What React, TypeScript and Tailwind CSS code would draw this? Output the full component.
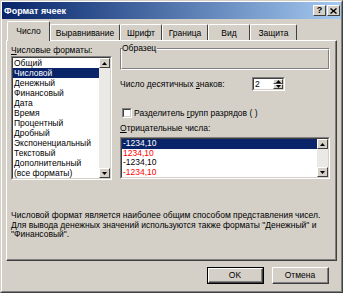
const formats = [
  'Общий',
  'Числовой',
  'Денежный',
  'Финансовый',
  'Дата',
  'Время',
  'Процентный',
  'Дробный',
  'Экспоненциальный',
  'Текстовый',
  'Дополнительный',
  '(все форматы)',
];

const negatives = [
  { text: '-1234,10', color: 'text-white', selected: true },
  { text: '1234,10', color: 'text-[#ff0000]', selected: false },
  { text: '-1234,10', color: 'text-black', selected: false },
  { text: '-1234,10', color: 'text-[#ff0000]', selected: false },
];

function Arrow({ down }: { down?: boolean }) {
  return (
    <div className="flex h-[10px] w-[11px] items-center justify-center border border-t-white border-l-white border-r-[#404040] border-b-[#404040] bg-[#d4d0c8]">
      <svg width="5" height="3" viewBox="0 0 5 3">
        {down ? <path d="M0 0h5L2.5 3z" fill="#000" /> : <path d="M0 3h5L2.5 0z" fill="#000" />}
      </svg>
    </div>
  );
}

function Scrollbar() {
  return (
    <div className="flex w-[11px] flex-col justify-between bg-[#ebe9e5]">
      <Arrow />
      <Arrow down />
    </div>
  );
}

function Sunken({ className, children }: { className?: string; children: React.ReactNode }) {
  return (
    <div className={`border border-t-[#808080] border-l-[#808080] border-r-white border-b-white ${className ?? ''}`}>
      <div className="flex h-full w-full border border-t-[#404040] border-l-[#404040] border-r-[#d4d0c8] border-b-[#d4d0c8] bg-white">
        {children}
      </div>
    </div>
  );
}

function Tab({ label, width, active }: { label: string; width: string; active?: boolean }) {
  if (active) {
    return (
      <div className={`relative z-10 -mb-px flex h-[20px] ${width} items-center justify-center rounded-t-[2px] border-t border-l border-r border-t-white border-l-white border-r-[#404040] bg-[#d4d0c8] pb-[2px]`}>
        {label}
      </div>
    );
  }
  return (
    <div className={`flex h-[16px] ${width} items-center justify-center rounded-t-[2px] border-t border-l border-r border-t-white border-l-white border-r-[#404040]`}>
      {label}
    </div>
  );
}

function Button({ label, isDefault }: { label: string; isDefault?: boolean }) {
  return (
    <div className={`h-[17px] w-[57px] ${isDefault ? 'border border-black' : ''}`}>
      <div className="h-full w-full border border-t-white border-l-white border-r-[#404040] border-b-[#404040]">
        <div className="flex h-full w-full items-center justify-center border-r border-b border-[#808080]">
          {label}
        </div>
      </div>
    </div>
  );
}

export default function App() {
  return (
    <div
      className="h-[293px] w-[343px] border border-t-[#d4d0c8] border-l-[#d4d0c8] border-r-[#404040] border-b-[#404040] bg-[#d4d0c8] text-[8.5px] leading-[10px] text-black"
      style={{ fontFamily: '"Liberation Sans", Arial, sans-serif' }}
    >
      <div className="flex h-full w-full flex-col border border-t-white border-l-white border-r-[#808080] border-b-[#808080]">
        {/* title bar */}
        <div className="flex h-[17px] items-center justify-between bg-gradient-to-r from-[#0a246a] to-[#a6caf0] pl-[2px] pr-px">
          <span className="text-[9px] font-bold text-white">Формат ячеек</span>
          <div className="flex gap-px">
            <div className="flex h-[11px] w-[13px] items-center justify-center border border-t-white border-l-white border-r-[#404040] border-b-[#404040] bg-[#d4d0c8] text-[9px] font-bold leading-none">
              ?
            </div>
            <div className="flex h-[11px] w-[13px] items-center justify-center border border-t-white border-l-white border-r-[#404040] border-b-[#404040] bg-[#d4d0c8]">
              <svg width="7" height="6" viewBox="0 0 7 6">
                <path d="M0.5 0.5L6.5 5.5M6.5 0.5L0.5 5.5" stroke="#000" strokeWidth="1.4" />
              </svg>
            </div>
          </div>
        </div>

        {/* tabs */}
        <div className="ml-[5px] flex h-[21px] items-end">
          <Tab label="Число" width="w-[43px]" active />
          <Tab label="Выравнивание" width="w-[70px]" />
          <Tab label="Шрифт" width="w-[42px]" />
          <Tab label="Граница" width="w-[46px]" />
          <Tab label="Вид" width="w-[42px]" />
          <Tab label="Защита" width="w-[47px]" />
        </div>

        {/* panel */}
        <div className="ml-[4px] h-[221px] w-[331px] border border-t-white border-l-white border-r-[#404040] border-b-[#404040]">
          <div className="flex h-full w-full flex-col border-r border-b border-[#808080]">
            <div className="flex gap-[8px] pl-[4px] pr-[4px]">
              {/* left column */}
              <div className="flex w-[101px] flex-col pt-[4px]">
                <div className="h-[10px]">
                  <span className="underline">Ч</span>исловые форматы:
                </div>
                <Sunken className="mt-px h-[124px] w-[101px]">
                  <div className="flex-1">
                    {formats.map((f, i) => (
                      <div
                        key={f}
                        className={`h-[10px] pl-px ${i === 1 ? 'bg-[#0a246a] text-white' : ''}`}
                      >
                        {f}
                      </div>
                    ))}
                  </div>
                  <Scrollbar />
                </Sunken>
              </div>

              {/* right column */}
              <div className="flex w-[210px] flex-col">
                <div className="relative mt-[7px] h-[22px] border border-t-[#808080] border-l-[#808080] border-r-white border-b-white">
                  <div className="h-full w-full border border-t-white border-l-white border-r-[#808080] border-b-[#808080]" />
                  <span className="absolute -top-[6px] left-[1px] bg-[#d4d0c8] pr-px">Образец</span>
                </div>

                <div className="mt-[7px] flex h-[14px] items-center">
                  <div className="w-[132px]">
                    Число десятичных <span className="underline">з</span>наков:
                  </div>
                  <Sunken className="h-[14px] w-[33px]">
                    <div className="flex-1 pl-px leading-[10px]">2</div>
                    <div className="flex flex-col">
                      <div className="flex h-[5px] w-[10px] items-center justify-center border border-t-white border-l-white border-r-[#404040] border-b-[#404040] bg-[#d4d0c8]">
                        <svg width="5" height="3" viewBox="0 0 5 3"><path d="M0 3h5L2.5 0z" fill="#000" /></svg>
                      </div>
                      <div className="flex h-[5px] w-[10px] items-center justify-center border border-t-white border-l-white border-r-[#404040] border-b-[#404040] bg-[#d4d0c8]">
                        <svg width="5" height="3" viewBox="0 0 5 3"><path d="M0 0h5L2.5 3z" fill="#000" /></svg>
                      </div>
                    </div>
                  </Sunken>
                </div>

                <div className="mt-[17px] flex h-[10px] items-center">
                  <Sunken className="ml-[2px] h-[10px] w-[10px]">
                    <div />
                  </Sunken>
                  <span className="ml-[2px]">
                    Разделитель <span className="underline">г</span>рупп разрядов ( )
                  </span>
                </div>

                <div className="mt-[5px] h-[10px]">
                  <span className="underline">О</span>трицательные числа:
                </div>

                <Sunken className="mt-[4px] h-[42px] w-[210px]">
                  <div className="flex-1">
                    {negatives.map((n, i) => (
                      <div
                        key={i}
                        className={`h-[9.5px] pl-px leading-[9.5px] ${n.color} ${n.selected ? 'bg-[#0a246a]' : ''}`}
                      >
                        {n.text}
                      </div>
                    ))}
                  </div>
                  <Scrollbar />
                </Sunken>
              </div>
            </div>

            <div className="mt-[31px] whitespace-nowrap pl-[4px] leading-[9.5px]">
              Числовой формат является наиболее общим способом представления чисел.
              <br />
              Для вывода денежных значений используются также форматы "Денежный" и
              <br />
              "Финансовый".
            </div>
          </div>
        </div>

        {/* buttons */}
        <div className="mt-[6px] flex justify-end gap-[8px] pr-[12px]">
          <Button label="OK" isDefault />
          <Button label="Отмена" />
        </div>
      </div>
    </div>
  );
}
